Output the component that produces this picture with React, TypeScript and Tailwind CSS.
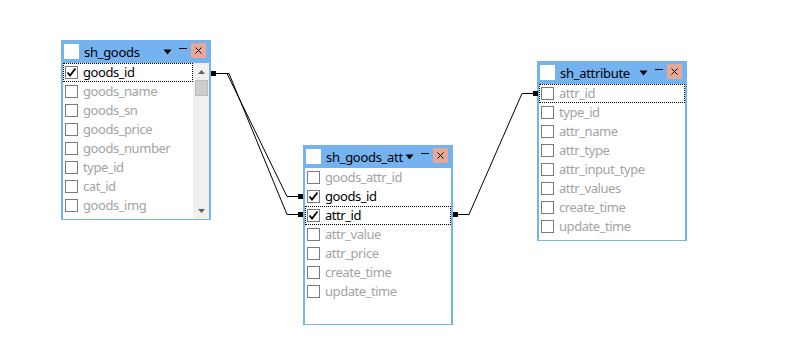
import React from 'react';

type Field = { name: string; checked?: boolean };

type TableWin = {
  title: string;
  x: number;
  y: number;
  fields: Field[];
  focused?: number;
  scroll?: boolean;
};

const TABLES: TableWin[] = [
  {
    title: 'sh_goods',
    x: 61,
    y: 40,
    focused: 0,
    scroll: true,
    fields: [
      { name: 'goods_id', checked: true },
      { name: 'goods_name' },
      { name: 'goods_sn' },
      { name: 'goods_price' },
      { name: 'goods_number' },
      { name: 'type_id' },
      { name: 'cat_id' },
      { name: 'goods_img' },
    ],
  },
  {
    title: 'sh_goods_att',
    x: 303,
    y: 145,
    focused: 2,
    fields: [
      { name: 'goods_attr_id' },
      { name: 'goods_id', checked: true },
      { name: 'attr_id', checked: true },
      { name: 'attr_value' },
      { name: 'attr_price' },
      { name: 'create_time' },
      { name: 'update_time' },
    ],
  },
  {
    title: 'sh_attribute',
    x: 537,
    y: 61,
    focused: 0,
    fields: [
      { name: 'attr_id' },
      { name: 'type_id' },
      { name: 'attr_name' },
      { name: 'attr_type' },
      { name: 'attr_input_type' },
      { name: 'attr_values' },
      { name: 'create_time' },
      { name: 'update_time' },
    ],
  },
];

const CheckBox: React.FC<{ checked?: boolean }> = ({ checked }) => (
  <div className="w-[13px] h-[13px] border border-[#7a7a7a] bg-white flex items-center justify-center shrink-0">
    {checked && (
      <svg width="11" height="11" viewBox="0 0 11 11">
        <path d="M1.5 5.5 L4 8.5 L9.5 1.5" stroke="#000" strokeWidth="1.8" fill="none" />
      </svg>
    )}
  </div>
);

const TableWindow: React.FC<{ t: TableWin }> = ({ t }) => (
  <div
    className="absolute w-[150px] h-[180px] bg-[#74b2f0] flex flex-col"
    style={{ left: t.x, top: t.y }}
  >
    {/* title bar */}
    <div className="h-[23px] flex items-center pl-[3px] shrink-0">
      <div className="w-[15px] h-[15px] bg-white shrink-0" />
      <div className="ml-[5px] w-[78px] h-[18px] overflow-hidden shrink-0">
        <span className="block text-[13px] tracking-[-0.3px] text-black leading-[18px] whitespace-nowrap">
          {t.title}
        </span>
      </div>
      <svg width="9" height="6" viewBox="0 0 9 6" className="ml-[1px] shrink-0">
        <path d="M0.5 0.5 H8.5 L4.5 5.5 Z" fill="#000" />
      </svg>
      <div className="w-[8px] h-[1px] bg-black ml-[7px] mb-[6px] shrink-0" />
      <div className="w-[15px] h-[15px] bg-[#e7a898] ml-[4px] mb-[2px] flex items-center justify-center shrink-0">
        <svg width="7" height="7" viewBox="0 0 7 7">
          <path d="M0.5 0.5 L6.5 6.5 M6.5 0.5 L0.5 6.5" stroke="#000" strokeWidth="1" />
        </svg>
      </div>
    </div>
    {/* body */}
    <div className="flex-1 mx-[2px] mb-[1px] bg-white flex overflow-hidden">
      <div className="flex-1 flex flex-col">
        {t.fields.map((f, i) => (
          <div
            key={f.name}
            className={
              'h-[19px] flex items-center pl-[1px] shrink-0 ' +
              (t.focused === i ? 'border border-dotted border-black' : 'border border-transparent')
            }
          >
            <CheckBox checked={f.checked} />
            <span
              className={
                'ml-[5px] text-[13px] tracking-[-0.45px] leading-none whitespace-nowrap ' +
                (f.checked ? 'text-black' : 'text-[#a3a3a3]')
              }
            >
              {f.name}
            </span>
          </div>
        ))}
      </div>
      {t.scroll && (
        <div className="w-[16px] bg-[#f0f0f0] flex flex-col items-center shrink-0">
          <div className="h-[17px] flex items-center justify-center">
            <svg width="7" height="4" viewBox="0 0 7 4">
              <path d="M0 4 L3.5 0 L7 4 Z" fill="#606060" />
            </svg>
          </div>
          <div className="w-[13px] h-[16px] bg-[#cdcdcd] border border-[#bcbcbc]" />
          <div className="flex-1" />
          <div className="h-[17px] flex items-center justify-center">
            <svg width="7" height="4" viewBox="0 0 7 4">
              <path d="M0 0 L3.5 4 L7 0 Z" fill="#606060" />
            </svg>
          </div>
        </div>
      )}
    </div>
  </div>
);

const Links: React.FC = () => (
  <svg className="absolute left-0 top-0" width="790" height="341" viewBox="0 0 790 341">
    <g stroke="#000" strokeWidth="1" fill="none">
      <polyline points="213,73.5 227,73.5 287,196.5 301,196.5" />
      <polyline points="213,73.5 229,73.5 287,214.5 301,214.5" />
      <polyline points="455,214.5 469,214.5 522,93.5 536,93.5" />
    </g>
    <g fill="#000">
      <rect x="211" y="71" width="5" height="5" />
      <rect x="298" y="194" width="5" height="5" />
      <rect x="298" y="212" width="5" height="5" />
      <rect x="453" y="212" width="5" height="5" />
      <rect x="533" y="91" width="5" height="5" />
    </g>
  </svg>
);

const App: React.FC = () => {
  return (
    <div
      className="relative w-[790px] h-[341px] bg-white overflow-hidden"
      style={{ fontFamily: '"Noto Sans", "Noto Sans CJK SC", sans-serif' }}
    >
      {TABLES.map((t) => (
        <TableWindow key={t.title} t={t} />
      ))}
      <Links />
    </div>
  );
};

export default App;
